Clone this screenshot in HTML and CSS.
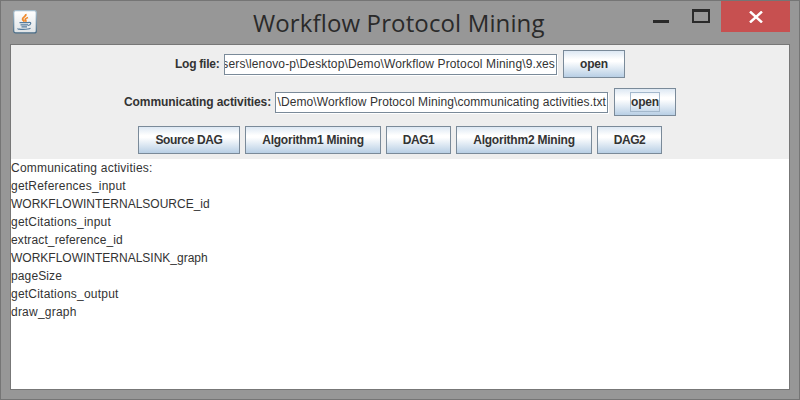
FILE: index.html
```
<!DOCTYPE html>
<html lang="en">
<head>
<meta charset="utf-8">
<title>Workflow Protocol Mining</title>
<link rel="stylesheet" href="styles.css">
</head>
<body>
<div class="window">
  <header class="titlebar">
    <svg class="java" width="24" height="24" viewBox="0 0 24 24">
      <defs><linearGradient id="tile" x1="0" y1="0" x2="0" y2="1"><stop offset="0" stop-color="#ffffff"/><stop offset="1" stop-color="#dfe3e6"/></linearGradient>
      <linearGradient id="edge" x1="0" y1="0" x2="0" y2="1"><stop offset="0" stop-color="#a5bccb"/><stop offset="1" stop-color="#486b86"/></linearGradient></defs>
      <rect x=".7" y=".7" width="22.6" height="22.2" rx="2" fill="url(#tile)" stroke="url(#edge)" stroke-width="1.2"/>
      <path d="M12.800 4c1 2.500-4 3.200-3.200 5.400.3.9 1.300 1.200 1.600 2.300M15 7.500c-3 1-3.200 2-2.200 3.200.3.5 0 .8-.3 1.100" fill="none" stroke="#f08a2c" stroke-width="1.800"/>
      <path d="M6.500 12.700h9M7.500 14.800h7.500M8.500 16.800h5.500M15.500 12.300c3.500-.3 2.500 2.700-.5 3.200M5 18.500c-1 1 10 1.300 12.500-.2" fill="none" stroke="#557b9c" stroke-width="1.200"/>
    </svg>
    <h1 class="title"><span>Workflow Protocol Mining</span></h1>
    <div class="controls">
      <svg class="control-icons" width="81" height="31" viewBox="0 0 81 31"><path d="M13 19h16v3H13z" fill="#2a2a2a"/><path fill-rule="evenodd" d="M52 8h18v14H52zM54 11v9h14v-9z" fill="#2a2a2a"/></svg>
      <div class="close"><svg width="14" height="12" viewBox="0 0 14 12"><path d="M1 .5l12 11M13 .5l-12 11" stroke="#fff" stroke-width="2.400"/></svg></div>
    </div>
  </header>
  <main class="content">
    <section class="panel">
      <div class="row files">
        <label class="label log">Log file:</label>
        <div class="field"><span class="log-path">sers\lenovo-p\Desktop\Demo\Workflow Protocol Mining\9.xes</span></div>
        <button class="button open">open</button>
      </div>
      <div class="row files">
        <label class="label comm">Communicating activities:</label>
        <div class="field"><span class="comm-path">\Demo\Workflow Protocol Mining\communicating activities.txt</span></div>
        <button class="button open"><span class="focused">open</span></button>
      </div>
      <div class="row actions">
        <button class="button source">Source DAG</button>
        <button class="button mining">Algorithm1 Mining</button>
        <button class="button dag">DAG1</button>
        <button class="button mining">Algorithm2 Mining</button>
        <button class="button dag">DAG2</button>
      </div>
    </section>
    <div class="output">
      <div class="wide">Communicating activities:</div>
      <div class="wide">getReferences_input</div>
      <div>WORKFLOWINTERNALSOURCE_id</div>
      <div class="wide">getCitations_input</div>
      <div class="medium">extract_reference_id</div>
      <div>WORKFLOWINTERNALSINK_graph</div>
      <div class="medium">pageSize</div>
      <div class="wide">getCitations_output</div>
      <div class="wide">draw_graph</div>
    </div>
  </main>
</div>
</body>
</html>
```
FILE: styles.css
```
* { box-sizing: border-box; }
body { margin: 0; font: 12px/18px "Liberation Sans", Arial, sans-serif; color: #333; }
.window { width: 800px; height: 400px; background: #979797; border: 1px solid #757575; padding: 0 9px 9px; display: flex; flex-direction: column; }
.titlebar { height: 43px; flex: none; display: flex; align-items: flex-start; }
.java { margin: 9px 0 0 3px; flex: none; }
.title { flex: 1; margin: 0 0 0 216px; font: 400 24px/43px "Open Sans", "Noto Sans", sans-serif; color: #2a2a2a; white-space: nowrap; }
.title span { display: inline-block; letter-spacing: .13px; }
.controls { display: flex; flex: none; }
.control-icons { display: block; }
.close { width: 69px; height: 31px; background: #c75050; display: flex; align-items: center; justify-content: center; }
.close svg { display: block; }
.content { flex: 1; border: 1px solid #777; background: #fff; display: flex; flex-direction: column; min-height: 0; }
.panel { height: 114px; flex: none; background: #eee; padding: 5px 0; display: flex; flex-direction: column; gap: 10px; }
.row { height: 28px; display: flex; justify-content: center; align-items: center; flex: none; }
.files { gap: 5px; }
.actions { gap: 5px; }
.label { font-weight: 700; white-space: nowrap; flex: none; }
.log { width: 44px; letter-spacing: -.25px; }
.comm { width: 146px; letter-spacing: -.09px; }
.field { width: 333px; height: 21px; border: 1px solid #7a8a99; background: #fff; box-shadow: 1px 1px #fff; display: flex; justify-content: flex-end; align-items: center; overflow: hidden; padding: 0 1px; white-space: nowrap; margin-right: 1px; flex: none; }
.log-path { letter-spacing: .13px; }
.comm-path { letter-spacing: .09px; }
.button { height: 28px; border: 1px solid #7a8a99; border-radius: 0; padding: 0; margin: 0; font: 700 12px/18px "Liberation Sans", Arial, sans-serif; color: #333; background: linear-gradient(#dde8f3 0%, #fff 32%, #fff 40%, #b8cfe5 100%); flex: none; white-space: nowrap; }
.open { width: 62px; letter-spacing: -.2px; }
.source { width: 102px; letter-spacing: -.35px; }
.mining { width: 136px; letter-spacing: -.22px; }
.dag { width: 65px; letter-spacing: -.4px; }
.focused { display: inline-block; border: 1px solid #a3b8cc; height: 20px; line-height: 18px; width: 30px; }
.output { flex: 1; background: #fff; }
.wide { letter-spacing: .22px; }
.medium { letter-spacing: .12px; }
```
